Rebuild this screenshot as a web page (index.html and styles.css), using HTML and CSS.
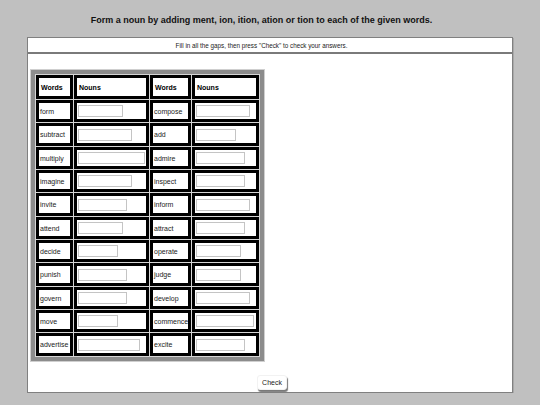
FILE: index.html
```html
<!DOCTYPE html>
<html>
<head>
<meta charset="utf-8">
<link rel="stylesheet" href="styles.css">
</head>
<body>
<div class="title">Form a noun by adding ment, ion, ition, ation or tion to each of the given words.</div>
<div class="box">
  <div class="instr">Fill in all the gaps, then press "Check" to check your answers.</div>
  <div class="content">
    <div class="frame">
      <table class="grid">
        <tr class="head">
          <td class="c1"><div class="cell">Words</div></td>
          <td class="c2"><div class="cell">Nouns</div></td>
          <td class="c3"><div class="cell">Words</div></td>
          <td class="c4"><div class="cell">Nouns</div></td>
        </tr>
        <tr>
          <td class="c1"><div class="cell">form</div></td>
          <td class="c2"><div class="cell"><input type="text" class="gap" style="width:45px"></div></td>
          <td class="c3"><div class="cell">compose</div></td>
          <td class="c4"><div class="cell"><input type="text" class="gap" style="width:54px"></div></td>
        </tr>
        <tr>
          <td class="c1"><div class="cell">subtract</div></td>
          <td class="c2"><div class="cell"><input type="text" class="gap" style="width:54px"></div></td>
          <td class="c3"><div class="cell">add</div></td>
          <td class="c4"><div class="cell"><input type="text" class="gap" style="width:40px"></div></td>
        </tr>
        <tr>
          <td class="c1"><div class="cell">multiply</div></td>
          <td class="c2"><div class="cell"><input type="text" class="gap" style="width:67px"></div></td>
          <td class="c3"><div class="cell">admire</div></td>
          <td class="c4"><div class="cell"><input type="text" class="gap" style="width:49px"></div></td>
        </tr>
        <tr>
          <td class="c1"><div class="cell">imagine</div></td>
          <td class="c2"><div class="cell"><input type="text" class="gap" style="width:54px"></div></td>
          <td class="c3"><div class="cell">inspect</div></td>
          <td class="c4"><div class="cell"><input type="text" class="gap" style="width:49px"></div></td>
        </tr>
        <tr>
          <td class="c1"><div class="cell">invite</div></td>
          <td class="c2"><div class="cell"><input type="text" class="gap" style="width:49px"></div></td>
          <td class="c3"><div class="cell">inform</div></td>
          <td class="c4"><div class="cell"><input type="text" class="gap" style="width:54px"></div></td>
        </tr>
        <tr>
          <td class="c1"><div class="cell">attend</div></td>
          <td class="c2"><div class="cell"><input type="text" class="gap" style="width:45px"></div></td>
          <td class="c3"><div class="cell">attract</div></td>
          <td class="c4"><div class="cell"><input type="text" class="gap" style="width:49px"></div></td>
        </tr>
        <tr>
          <td class="c1"><div class="cell">decide</div></td>
          <td class="c2"><div class="cell"><input type="text" class="gap" style="width:40px"></div></td>
          <td class="c3"><div class="cell">operate</div></td>
          <td class="c4"><div class="cell"><input type="text" class="gap" style="width:45px"></div></td>
        </tr>
        <tr>
          <td class="c1"><div class="cell">punish</div></td>
          <td class="c2"><div class="cell"><input type="text" class="gap" style="width:49px"></div></td>
          <td class="c3"><div class="cell">judge</div></td>
          <td class="c4"><div class="cell"><input type="text" class="gap" style="width:45px"></div></td>
        </tr>
        <tr>
          <td class="c1"><div class="cell">govern</div></td>
          <td class="c2"><div class="cell"><input type="text" class="gap" style="width:49px"></div></td>
          <td class="c3"><div class="cell">develop</div></td>
          <td class="c4"><div class="cell"><input type="text" class="gap" style="width:54px"></div></td>
        </tr>
        <tr>
          <td class="c1"><div class="cell">move</div></td>
          <td class="c2"><div class="cell"><input type="text" class="gap" style="width:40px"></div></td>
          <td class="c3"><div class="cell">commence</div></td>
          <td class="c4"><div class="cell"><input type="text" class="gap" style="width:58px"></div></td>
        </tr>
        <tr>
          <td class="c1"><div class="cell">advertise</div></td>
          <td class="c2"><div class="cell"><input type="text" class="gap" style="width:62px"></div></td>
          <td class="c3"><div class="cell">excite</div></td>
          <td class="c4"><div class="cell"><input type="text" class="gap" style="width:49px"></div></td>
        </tr>
      </table>
    </div>
    <div class="actions"><button class="check" type="button">Check</button></div>
  </div>
</div>
</body>
</html>
```

FILE: styles.css
```css
html, body {
  margin: 0;
  padding: 0;
  background: #c0c0c0;
  font-family: "Liberation Sans", Arial, sans-serif;
  color: #000;
}

.title {
  height: 37px;
  display: flex;
  align-items: center;
  justify-content: center;
  font-size: 9px;
  font-weight: bold;
  color: #111;
  padding: 3px 17px 0 0;
  box-sizing: border-box;
}

.box {
  margin: 0 27px;
  height: 356px;
  box-sizing: border-box;
  background: #fff;
  border: 1px solid #808080;
  box-shadow: 1px 1px 0 #a8a8a8;
}

.instr {
  height: 14px;
  border-bottom: 2px solid #7a7a7a;
  display: flex;
  align-items: center;
  justify-content: center;
  padding-right: 17px;
  font-size: 6.3px;
  color: #222;
}

.content {
  padding: 15px 0 0 2px;
}

.frame {
  display: table;
  border: 1px solid #cfcfcf;
}

.grid {
  border: 4px solid #8c8c8c;
  border-spacing: 1px;
  background: #d6d6d6;
}

.grid td {
  background: #000;
  padding: 3px;
}

.cell {
  background: #fff;
  height: 16px;
  display: flex;
  align-items: center;
  padding-left: 1px;
  box-sizing: border-box;
  font-size: 7px;
  color: #222;
  white-space: nowrap;
  overflow: hidden;
}

.grid tr:nth-child(3n) .cell {
  height: 17px;
}

.head .cell {
  height: 18px;
  font-weight: bold;
  color: #000;
  padding-left: 2px;
}

.c1 .cell { width: 31px; }
.c2 .cell { width: 69px; }
.c3 .cell { width: 35px; }
.c4 .cell { width: 61px; }

.gap {
  height: 12px;
  box-sizing: border-box;
  margin: 0;
  padding: 0;
  border: 1px solid #c4c4c4;
  background: #fff;
  outline: none;
}

.actions {
  display: flex;
  justify-content: center;
  margin-top: 13px;
}

.check {
  width: 30px;
  height: 15px;
  padding: 0;
  margin-left: 2px;
  background: #fff;
  border: 1px solid #f2f2f2;
  border-radius: 3px;
  box-shadow: 1px 2px 1px #7a7a7a;
  font-family: "Liberation Sans", Arial, sans-serif;
  font-size: 7px;
  color: #222;
}
```
